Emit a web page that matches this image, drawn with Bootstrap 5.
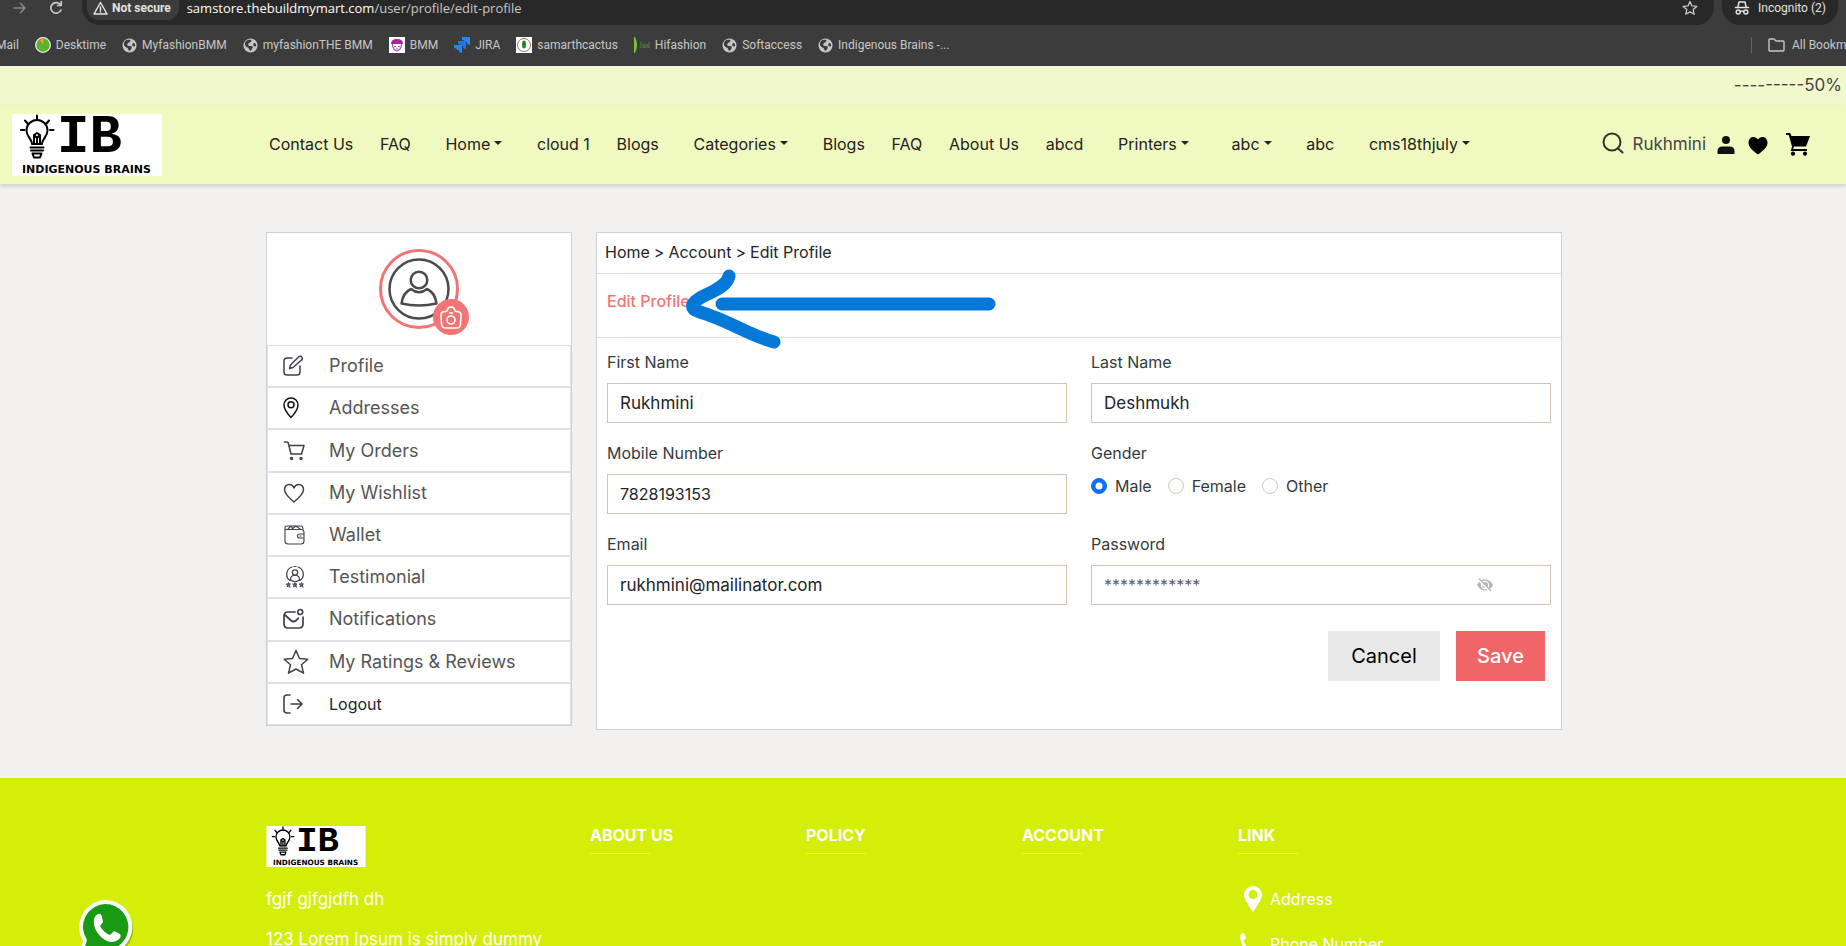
<!DOCTYPE html>
<html lang="en">
<head>
<meta charset="utf-8">
<meta name="viewport" content="width=device-width, initial-scale=1">
<title>Edit Profile</title>
<link href="https://cdn.jsdelivr.net/npm/bootstrap@5.3.0/dist/css/bootstrap.min.css" rel="stylesheet">
<style>
  :root { --coral: #f17575; --ink: #212529; --lime: #d4ee08; }
  body { font-family: Inter, "Liberation Sans", sans-serif; background: #f3f1f0; color: var(--ink); }
  a { color: inherit; text-decoration: none; }
  svg { display: block; flex: none; }
  .line { fill: none; stroke: currentColor; stroke-linecap: round; stroke-linejoin: round; }

  /* browser bars */
  .browser { background: #3c3c3c; color: #c7c7c7; font-family: Roboto, "Noto Sans", sans-serif; font-size: 12px; line-height: 16px; }
  .toolbar { height: 25px; padding-left: 12px; padding-right: 8px; }
  .reload { margin: 0 18px 0 20px; }
  .omnibox, .incognito { background: #282828; height: 25px; border-radius: 0 0 18px 18px; }
  .omnibox { padding-left: 5px; padding-right: 16px; }
  .address { font-family: "Open Sans", "Noto Sans", sans-serif; font-size: 13px; color: #fff; }
  .address span { color: #c7c7c7; }
  .secure { background: #3c3c3c; height: 20px; border-radius: 0 0 12px 12px; padding: 0 8px 4px 6px; color: #e3e3e3; font-size: 12px; font-weight: 700; }
  .incognito { width: 116px; padding: 0 0 9px 12px; color: #e3e3e3; }
  .bookmarks { height: 41px; gap: 16px; padding-bottom: 1px; white-space: nowrap; }
  .bookmarks a { display: flex; align-items: center; gap: 5px; }
  .bookmarks a:first-child { margin-left: -4px; }
  .bookmarks .all-marks { border-left: 1px solid #666; padding-left: 16px; width: 95px; gap: 7px; overflow: hidden; }

  /* shop header */
  .promo { background: #f1f8cc; height: 39px; padding-right: 4px; color: #444; font-size: 17px; }
  .shop-head { background: #f0f9bf; height: 79px; padding: 0 36px 0 12px; box-shadow: 0 2px 4px rgba(0,0,0,.15); }
  .main-links { flex: 0 0 1201px; margin-left: 107px; margin-right: auto; padding-bottom: 2px; color: #222; }
  .main-links .dropdown-toggle { margin: 0 8px; }
  .main-links .dropdown-toggle:last-child { margin-right: 0; }
  .user-name { font-size: 17px; color: #444; }

  /* account area */
  .page-area { padding: 48px 18px 48px 0; }
  .panel { background: #fff; border: 1px solid #cfd1d4; }
  .avatar-box { height: 112px; padding-top: 16px; }
  .avatar { width: 80px; height: 80px; border: 3px solid var(--coral); border-radius: 50%; }
  .cam { right: -13px; bottom: -9px; width: 36px; height: 36px; border: 0; border-radius: 50%; background: var(--coral); color: #fff; }
  .side-list { min-height: 380px; font-size: 18px; line-height: 24px; }
  .side-list a { flex: 1 1 0; display: flex; align-items: center; border: 1px solid #dee2e6; padding: 0 16px 0 15px; color: #555; }
  .side-list svg { margin-right: 24px; color: #41414b; }
  .side-list .wide-icon { margin-right: 20px; }
  .side-list .logout { font-size: 16px; color: var(--ink); }
  .crumbs { height: 41px; padding: 0 8px 2px; border-bottom: 1px solid #e5d9dc; }
  .card-title-row { height: 64px; padding: 15px 10px; border-bottom: 1px solid #e5d9dc; color: var(--coral); font-weight: 500; }
  .profile-form { padding: 12px 10px 48px; }
  .fields { display: grid; grid-template-columns: 1fr 1fr; column-gap: 24px; row-gap: 18px; }
  .fields .cap { display: block; font-size: 16px; line-height: 24px; margin: 0 0 9px; float: none; color: #333b40; }
  .fields .form-control { height: 40px; border: 1px solid #cfc6b4; border-radius: 0; padding: 0 12px; font-size: 17px; color: var(--ink); }
  .fields .form-check-label { line-height: 24px; color: #333b40; }
  .fields .form-check-input { margin: 0 8px 0 0; border-color: #d3cac2; }
  .fields .form-check-input:checked { border-color: #0d6efd; }
  .eye { right: 58px; top: 12px; border: 0; background: none; padding: 0; color: #b5b5b5; }
  .form-buttons { margin-top: 26px; padding-right: 6px; }
  .act { height: 50px; border: 0; border-radius: 0; font-size: 20px; padding: 0; }
  .act-cancel, .act-cancel:hover { background: #e9e9e9; color: #000; width: 112px; }
  .act-save, .act-save:hover { background: #f06666; color: #fff; width: 89px; font-weight: 500; }
  .arrow { left: 88px; top: 30px; pointer-events: none; }

  /* footer */
  .foot { background: var(--lime); color: #fff; padding: 48px 18px 40px 0; }
  .foot h2 { font-size: 16px; font-weight: 700; line-height: 19px; margin: 0; }
  .foot h2::after { content: ""; display: block; width: 60px; height: 1px; margin-top: 8px; background: rgba(255,255,255,.4); }
  .foot p { margin: 0 0 16px; font-size: 17px; line-height: 24px; }
  .whatsapp { left: 76px; top: 898px; }
</style>
</head>
<body>
<svg class="d-none" aria-hidden="true">
  <symbol id="globe" viewBox="0 0 16 16"><circle cx="8" cy="8" r="7.500" fill="#c4c7c9"/><path d="M3 3.500C5 2 8 1.500 9 2.500c.5 1-1 2-2 2.500S4.800 7 6 8s4 .2 4.500 1.500S9 12 8.500 13.500c-1 .5-2-.5-2.200-2S4 10 3 9 1.500 5 3 3.500zM11.500 5.500c1-.5 2.300.5 2.500 2s-1 2-2 1.500-1.500-3-.5-3.500z" fill="#3c3c3c"/></symbol>
  <symbol id="ib-logo" viewBox="0 0 150 62">
    <path d="M0 0h150v62H0z" fill="#fff"/>
    <g class="line" style="color:#000" stroke-width="2"><path d="M25 1.500v3M13 6.500l2.500 3M37 6.500l-2.500 3M9 16h3.500M38 16h3.500"/><path d="M20 30c0-5-5.500-7-5.500-13.500a10.500 10.500 0 0 1 21 0C35.500 23 30 25 30 30z"/><path d="M22 30v-9l3 3 3-3v9M22 21l3-2 3 2M25 24v6M18.500 33.500h13M19 36.500h12"/><path d="M20.500 39.500h9l-1.500 4h-6z"/></g>
    <text x="45" y="38" font-family="Liberation Mono, monospace" font-weight="700" font-size="54">IB</text>
    <text x="10" y="59" font-family="DejaVu Sans, sans-serif" font-weight="700" font-size="11">INDIGENOUS BRAINS</text>
  </symbol>
</svg>

<div class="vh-100 overflow-hidden position-relative">
  <div class="browser">
    <div class="toolbar d-flex">
      <svg width="16" height="16" viewBox="0 0 16 16" class="line" style="color:#888" stroke-width="1.600"><path d="M2 8h11M8.500 3.500L13 8l-4.500 4.500"/></svg>
      <svg width="16" height="16" viewBox="0 0 16 16" class="line reload" stroke-width="1.700"><path d="M13 10a5.300 5.300 0 1 1-.8-5.500M13.200 1.500v4H9.500"/></svg>
      <div class="omnibox d-flex flex-fill">
        <button class="secure border-0 d-flex align-items-center gap-1" type="button">
          <svg width="15" height="14" viewBox="0 0 15 14" class="line" stroke-width="1.500"><path d="M7.500 1.500L14 13H1zM7.500 6v3.500M7.500 11v.3"/></svg>Not secure</button>
        <div class="address ms-2">samstore.thebuildmymart.com<span>/user/profile/edit-profile</span></div>
        <svg width="16" height="16" viewBox="0 0 16 16" class="line ms-auto" stroke-width="1.300"><path d="M8 1.500l2 4.400 4.800.5-3.600 3.200 1 4.700L8 11.900l-4.200 2.400 1-4.700L1.200 6.400 6 5.900z"/></svg>
      </div>
      <div class="incognito ms-2 d-flex align-items-center gap-2">
        <svg width="16" height="16" viewBox="0 0 16 16" class="line" stroke-width="1.500"><path d="M4 6.500L5 2h6l1 4.500M1.500 7.500h13M6.500 11.500q1.500-1 3 0"/><circle cx="4.200" cy="12" r="2"/><circle cx="11.800" cy="12" r="2"/></svg>Incognito (2)</div>
    </div>
    <div class="bookmarks d-flex align-items-center">
      <a href="#">Mail</a>
      <a href="#"><svg width="16" height="16" viewBox="0 0 16 16"><circle cx="8" cy="8" r="7.300" fill="#55b52b" stroke="#eee" stroke-width="1.300"/><path d="M8 8V1.500L4 3z" fill="#f33"/><path d="M8 8V2a6 6 0 0 0-3 1z" fill="#fa3"/></svg>Desktime</a>
      <a href="#"><svg width="15" height="15"><use href="#globe"/></svg>MyfashionBMM</a>
      <a href="#"><svg width="15" height="15"><use href="#globe"/></svg>myfashionTHE BMM</a>
      <a href="#"><svg width="16" height="16" viewBox="0 0 16 16"><path d="M0 0h16v16H0z" fill="#fff"/><path d="M2 7q0-5 6-5t6 5z" fill="#a3279f"/><path d="M3.500 7q0 6 4.500 7 4.500-1 4.500-7M5 9.500h2M9 9.500h2M6.500 12h3" fill="none" stroke="#b15aae" stroke-width="1.200"/></svg>BMM</a>
      <a href="#"><svg width="16" height="16" viewBox="0 0 16 16" fill="#2684ff"><path d="M8 0h8v8q-3 0-3-3h-2q0-2-3-2z"/><path d="M4 4h8v8q-3 0-3-3H7Q7 7 4 7z" fill="#1f75f0"/><path d="M0 8h8v8q-3 0-3-3H3q0-2-3-2z"/></svg>JIRA</a>
      <a href="#"><svg width="16" height="16" viewBox="0 0 16 16"><path d="M0 0h16v16H0z" fill="#fff"/><circle cx="8" cy="8" r="6.500" fill="none" stroke="#a5715b"/><ellipse cx="8" cy="7.500" rx="2" ry="4" fill="#178a2c"/></svg>samarthcactus</a>
      <a href="#"><svg width="16" height="16" viewBox="0 0 16 16"><path d="M0 0h1q4 8 0 16H0z" fill="#78c143"/><path d="M7 11V5M9 11V7l2 4V6M13 11V7l2 4V5" stroke="#4e7a38" fill="none"/></svg>Hifashion</a>
      <a href="#"><svg width="15" height="15"><use href="#globe"/></svg>Softaccess</a>
      <a href="#"><svg width="15" height="15"><use href="#globe"/></svg>Indigenous Brains -...</a>
      <a href="#" class="all-marks ms-auto"><svg width="17" height="14" viewBox="0 0 17 14" class="line" stroke-width="1.400"><path d="M1 12V2q0-1 1-1h4l2 2h7q1 0 1 1v8q0 1-1 1H2q-1 0-1-1z"/></svg>All Bookmarks</a>
    </div>
  </div>

  <div class="promo d-flex align-items-center justify-content-end">---------50%</div>
  <header class="shop-head d-flex align-items-center position-relative">
    <a href="#" aria-label="Indigenous Brains"><svg width="150" height="62"><use href="#ib-logo"/></svg></a>
    <nav class="main-links d-flex justify-content-between align-items-center text-nowrap">
      <a href="#">Contact Us</a><a href="#">FAQ</a><a href="#" class="dropdown-toggle">Home</a><a href="#">cloud 1</a><a href="#">Blogs</a><a href="#" class="dropdown-toggle">Categories</a><a href="#">Blogs</a><a href="#">FAQ</a><a href="#">About Us</a><a href="#">abcd</a><a href="#" class="dropdown-toggle">Printers</a><a href="#" class="dropdown-toggle">abc</a><a href="#">abc</a><a href="#" class="dropdown-toggle">cms18thjuly</a>
    </nav>
    <div class="d-flex align-items-center">
      <a href="#" aria-label="Search" class="me-2 pb-1"><svg width="22" height="22" viewBox="0 0 22 22" class="line" style="color:#333" stroke-width="2"><circle cx="10" cy="10" r="8.500"/><path d="M16 16.500l4.500 4"/></svg></a>
      <a href="#" class="user-name">Rukhmini</a>
      <a href="#" aria-label="Account" class="ms-2"><svg width="24" height="22" viewBox="0 0 24 22"><circle cx="12" cy="6" r="4" fill="#111"/><path d="M3.500 20v-3q0-4.500 5-4.500h7q5 0 5 4.500v3z" fill="#111"/></svg></a>
      <a href="#" aria-label="Wishlist" class="ms-2"><svg width="24" height="22" viewBox="0 0 24 22"><path d="M12 20.500C6 16 2.500 13 2.500 8.500c0-6 7-7.500 9.500-3 2.500-4.500 9.500-3 9.500 3C21.500 13 18 16 12 20.500z"/></svg></a>
      <a href="#" aria-label="Cart" class="ms-3"><svg width="24" height="23" viewBox="0 0 24 23"><path d="M0 0h4.200l1.300 3H24l-4 10.500H8L7.200 16H21v2H4.800L6 13.500 2.800 2H0z"/><circle cx="7" cy="20.700" r="2.100"/><circle cx="19" cy="20.700" r="2.100"/></svg></a>
    </div>
  </header>

  <main class="page-area">
    <div class="container-xxl">
      <div class="row align-items-start">
        <aside class="col-3">
          <div class="panel">
            <div class="avatar-box">
              <div class="avatar mx-auto position-relative d-flex align-items-center justify-content-center">
                <svg width="62" height="62" viewBox="0 0 62 62" class="line" style="color:#4b4b4b" stroke-width="2.500"><circle cx="31" cy="31" r="29.500"/><circle cx="31" cy="22" r="8.300"/><path d="M23 31q8 6.500 16 0 8 3.500 9.500 14.500-17.500 4-35 0Q15 34.500 23 31z"/></svg>
                <button type="button" class="cam position-absolute d-flex align-items-center justify-content-center p-0" aria-label="Change photo"><svg width="22" height="23" viewBox="0 0 22 23" class="line" stroke-width="1.600"><path d="M5.500 5.500Q7 5.500 7.500 3.500 8 1 11 1t3.500 2.500q.5 2 2 2 5 0 4.500 4.500l-.5 8q-.3 4-4 4h-11q-3.700 0-4-4L1 10q-.5-4.500 4.500-4.500zM9.500 7h3"/><circle cx="11" cy="14" r="4"/></svg></button>
              </div>
            </div>
            <nav class="list-group list-group-flush side-list">
              <a href="#"><svg width="22" height="22" viewBox="0 0 22 22" class="line" stroke-width="1.500"><path d="M9 3H4Q1 3 1 6v11q0 3 3 3h10q3 0 3-3v-6M16 1.500q2-1 3 1t-1 3l-8 7-3.500 1L7.500 10z"/></svg>Profile</a>
              <a href="#"><svg width="22" height="22" viewBox="0 0 22 22" class="line" style="color:#111" stroke-width="1.500"><path d="M8 20.500Q1 13 1 8a7 7 0 0 1 14 0q0 5-7 12.500z"/><circle cx="8" cy="7.800" r="3"/></svg>Addresses</a>
              <a href="#"><svg width="22" height="22" viewBox="0 0 22 22" class="line" stroke-width="1.500"><path d="M1.500 2H4q1 0 1.300 1L8 14h10.500L21 5.500H6"/><circle cx="8.500" cy="18.500" r="1"/><circle cx="18" cy="18.500" r="1"/></svg>My Orders</a>
              <a href="#"><svg width="22" height="22" viewBox="0 0 22 22" class="line" stroke-width="1.500"><path d="M11 20Q2 12.500 1.500 8q0-5.500 5-5.500Q9.500 2.500 11 6q1.500-3.500 4.500-3.500 5 0 5 5.500Q20 12.500 11 20z"/></svg>My Wishlist</a>
              <a href="#"><svg width="22" height="22" viewBox="0 0 22 22" class="line" stroke-width="1.100"><path d="M2 5.500h16q3 0 3 3V10M2 3.500V17q0 3 3 3h13q3 0 3-3v-3M21 10h-4.500q-2 0-2 2t2 2H21zM2 3.500Q2 2 4 2h14q2 0 2 3.500M5 5l3-3 2 3M9 5l4-3 4 3M17 12h1"/></svg>Wallet</a>
              <a href="#"><svg width="22" height="22" viewBox="0 0 22 22" class="line" stroke-width="1.200"><path d="M7 14.500A7.600 7.600 0 0 1 9 1M15 1a7.600 7.600 0 0 1 2 13.500M11 .5h2M7.500 14q0-4 3-4.500h3q3 .5 3 4.500-4.500 3-9 0z"/><circle cx="12" cy="6.500" r="2.700"/><path stroke-width=".9" d="M3.500 18h4L4 21l1.500-4.500L7 21zM10 18h4l-3.500 3 1.500-4.500 1.500 4.500zM16.500 18h4L17 21l1.500-4.500L20 21z"/></svg>Testimonial</a>
              <a href="#"><svg width="22" height="22" viewBox="0 0 22 22" class="line" stroke-width="1.700"><path d="M12 4H5Q1 4 1 8v8q0 4 4 4h11q4 0 4-4V9M2 7l6 5.500q2.500 2 5 0l2.500-2.300"/><circle cx="17.200" cy="4" r="2.500"/></svg>Notifications</a>
              <a href="#"><svg width="26" height="26" viewBox="0 0 26 26" class="line wide-icon" stroke-width="1.500"><path d="M13 1.500l3.500 8 8.300.8-6.300 5.500 2 8.400-7.500-4.200-7.500 4.200 2-8.400L1.200 10.300l8.300-.8z"/></svg>My Ratings &amp; Reviews</a>
              <a href="#" class="logout"><svg width="22" height="22" viewBox="0 0 22 22" class="line" stroke-width="1.600"><path d="M7 2H4Q1 2 1 5v12q0 3 3 3h3M8 11h11M14.500 6.500L19 11l-4.500 4.500"/></svg>Logout</a>
            </nav>
          </div>
        </aside>

        <section class="col-9">
          <div class="panel position-relative">
            <div class="crumbs d-flex align-items-center gap-1"><a href="#">Home</a><span>&gt;</span><a href="#">Account</a><span>&gt;</span><span>Edit Profile</span></div>
            <div class="card-title-row">Edit Profile</div>
            <form class="profile-form">
              <div class="fields">
                <div><label class="cap" for="fn">First Name</label><input id="fn" type="text" class="form-control" value="Rukhmini"></div>
                <div><label class="cap" for="ln">Last Name</label><input id="ln" type="text" class="form-control" value="Deshmukh"></div>
                <div><label class="cap" for="mb">Mobile Number</label><input id="mb" type="tel" class="form-control fs-6" value="7828193153"></div>
                <fieldset><legend class="cap">Gender</legend>
                  <div class="d-flex gap-3">
                    <div class="d-flex align-items-center"><input class="form-check-input" type="radio" name="g" id="gm" checked><label class="form-check-label" for="gm">Male</label></div>
                    <div class="d-flex align-items-center"><input class="form-check-input" type="radio" name="g" id="gf"><label class="form-check-label" for="gf">Female</label></div>
                    <div class="d-flex align-items-center"><input class="form-check-input" type="radio" name="g" id="go"><label class="form-check-label" for="go">Other</label></div>
                  </div>
                </fieldset>
                <div><label class="cap" for="em">Email</label><input id="em" type="email" class="form-control" value="rukhmini@mailinator.com"></div>
                <div><label class="cap" for="pw">Password</label>
                  <div class="position-relative"><input id="pw" type="password" class="form-control fs-6" placeholder="************">
                    <button type="button" class="eye position-absolute" aria-label="Show password"><svg width="16" height="16" viewBox="0 0 16 16"><path d="M0 8q3-5.500 8-5.500T16 8q-3 5.500-8 5.500T0 8z" fill="currentColor"/><circle cx="8" cy="8" r="3.600" fill="none" stroke="#fff" stroke-width="1.200"/><path d="M1.500 2.500l12 12" stroke="#fff" stroke-width="2.500"/><path d="M2 1.500l12 12.500" stroke="currentColor" stroke-width="1.200"/></svg></button></div></div>
              </div>
              <div class="form-buttons d-flex justify-content-end gap-3"><button type="button" class="btn act act-cancel">Cancel</button><button type="submit" class="btn act act-save">Save</button></div>
            </form>
            <svg class="arrow position-absolute" width="316" height="90" viewBox="0 0 316 90" fill="none" stroke="#0279d9" stroke-width="13" stroke-linecap="round" stroke-linejoin="round"><path d="M44 13c-2 11-20 17-29 22-10 6-10 11 0 14 30 9 46 22 74 30"/><path d="M37 41h267"/></svg>
          </div>
        </section>
      </div>
    </div>
  </main>

  <footer class="foot">
    <div class="container-xxl">
      <div class="row g-0">
        <div class="col-3">
          <a href="#" aria-label="Indigenous Brains"><svg width="100" height="41" class="mb-3"><use href="#ib-logo"/></svg></a>
          <p class="pt-1">fgjf gjfgjdfh dh</p>
          <p>123 Lorem Ipsum is simply dummy</p>
        </div>
        <div class="col-2"><h2>ABOUT US</h2></div>
        <div class="col-2"><h2>POLICY</h2></div>
        <div class="col-2"><h2>ACCOUNT</h2></div>
        <div class="col-3"><h2>LINK</h2>
          <a href="#" class="d-flex align-items-center mt-4 pt-2"><svg width="24" height="26" viewBox="0 0 24 26" class="me-2"><path fill-rule="evenodd" fill="#fff" d="M15 0a9 9 0 0 1 9 9c0 5-9 17-9 17S6 14 6 9a9 9 0 0 1 9-9zm0 4a4.500 4.500 0 1 0 0 9 4.500 4.500 0 0 0 0-9z"/></svg>Address</a>
          <a href="#" class="d-flex align-items-center mt-3 pt-1"><svg width="24" height="24" viewBox="0 0 24 24" class="me-2"><path fill="#fff" d="M2 5q0-4 4-4l2 5-2.500 3q2 6 8 9l3-3 5 2q1 5-3 6Q4 22 2 5z"/></svg>Phone Number</a>
        </div>
      </div>
    </div>
  </footer>

  <a href="#" class="whatsapp position-absolute" aria-label="WhatsApp"><svg width="60" height="60" viewBox="0 0 60 60"><path d="M30 4a26 26 0 1 1-12 49L4 58l4-15A26 26 0 0 1 30 4z" fill="#0004" transform="translate(1 1)"/><path d="M29 2a27 27 0 1 1-12 51L3 57l4-14A27 27 0 0 1 29 2z" fill="#f7f7f7"/><path d="M29 6a23 23 0 1 1-11 43l-10 3 3-10A23 23 0 0 1 29 6z" fill="#199a14"/><path d="M22 16q3-1 4 3l1 5-3 4q4 7 10 9l4-4 6 3q2 3-2 6-6 4-13 0-9-6-11-15-1-9 4-11z" fill="#fff"/></svg></a>
</div>
<script src="https://cdn.jsdelivr.net/npm/bootstrap@5.3.0/dist/js/bootstrap.bundle.min.js"></script>
</body>
</html>
